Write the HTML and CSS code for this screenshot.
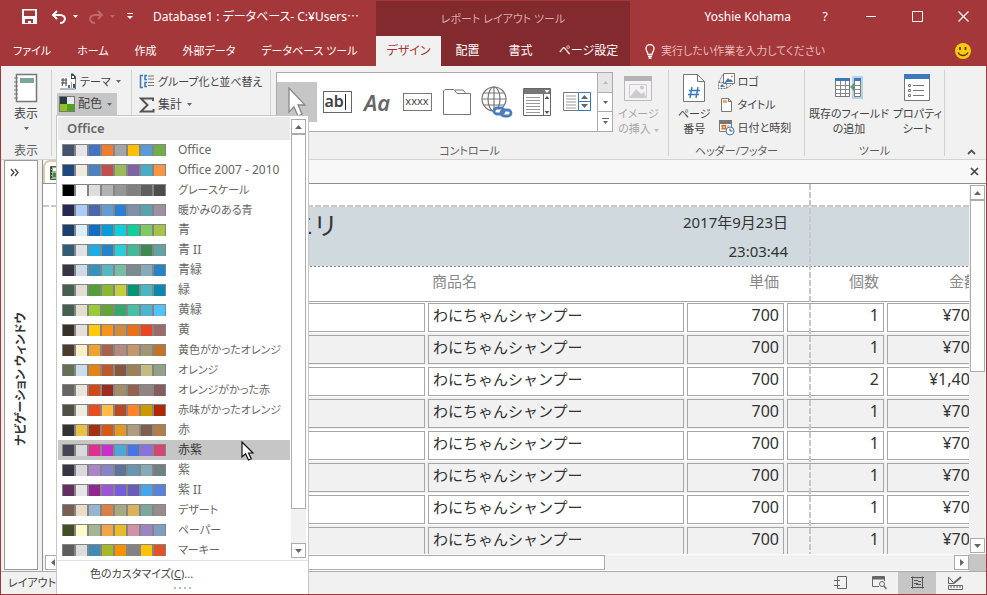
FILE: index.html
```html
<!DOCTYPE html>
<html lang="ja">
<head>
<meta charset="utf-8">
<title>Database1</title>
<link rel="stylesheet" href="styles.css">
</head>
<body>
<div class="window">
  <header class="header">
    <div class="header-main">
      <div class="titlebar">
        <button class="qat save" aria-label="上書き保存"><svg width="15" height="15" viewBox="0 0 15 15"><path d="M0 0h15v15H0z" fill="#fff"/><path d="M2 1.500h11V7H2zM3 10h8v4H9v-2H6v2H3z" fill="#a4373a"/></svg></button>
        <button class="qat undo" aria-label="元に戻す"><svg width="16" height="14" viewBox="0 0 16 14" fill="none" stroke="#fff" stroke-width="2"><path d="M6 1L2 5l4 4M2 5h7c7 0 6 8 0 8"/></svg></button>
        <svg class="arrow" width="5" height="3"><path d="M0 0h5L2.500 3z" fill="#fff"/></svg>
        <button class="qat redo" aria-label="やり直し"><svg width="16" height="14" viewBox="0 0 16 14" fill="none" stroke="#c0696c" stroke-width="2"><path d="M10 1l4 4-4 4M14 5H7C0 5 1 13 7 13"/></svg></button>
        <svg class="arrow" width="5" height="3"><path d="M0 0h5L2.500 3z" fill="#c0696c"/></svg>
        <button class="qat custom" aria-label="カスタマイズ"><svg width="6" height="7"><path d="M0 0h6v1H0zM0 3h6L3 6z" fill="#fff"/></svg></button>
        <span class="doc-title">Database1 : データベース- C:¥Users<span class="dots">…</span></span>
      </div>
      <nav class="tabs">
        <button>ファイル</button><button>ホーム</button><button>作成</button><button>外部データ</button><button>データベース ツール</button>
      </nav>
    </div>
    <div class="header-context">
      <div class="context-title">レポート レイアウト ツール</div>
      <nav class="tabs">
        <button class="active">デザイン</button><button>配置</button><button>書式</button><button>ページ設定</button>
      </nav>
    </div>
    <div class="header-side">
      <div class="titlebar controls">
        <span class="user">Yoshie Kohama</span>
        <button aria-label="ヘルプ">?</button>
        <button aria-label="最小化"><svg width="11" height="11"><path d="M0 5.500h10" stroke="#fff"/></svg></button>
        <button aria-label="最大化"><svg width="11" height="11"><path d="M.5.5h10v10H.5z" fill="none" stroke="#fff"/></svg></button>
        <button aria-label="閉じる"><svg width="11" height="11"><path d="M.5.5l10 10M10.500.5l-10 10" stroke="#fff" stroke-width="1.200"/></svg></button>
      </div>
      <div class="tell">
        <svg width="10" height="15" viewBox="0 0 10 15" fill="none" stroke="#fff" stroke-width="1.300"><path d="M3 10.500C3 8 1 7.500 1 4.500a4 4 0 018 0c0 3-2 3.500-2 6zM3 12.300h4M3.500 14h3"/></svg>
        <input type="text" aria-label="操作アシスト" placeholder="実行したい作業を入力してください">
        <button class="smile" aria-label="フィードバック"><svg width="16" height="16" viewBox="0 0 16 16"><circle cx="8" cy="8" r="8" fill="#fcca0c"/><path d="M5 4v3M10.500 4v3" stroke="#5d3b10" stroke-width="1.800"/><path d="M3 9.500c2 4 8 4 10 0" fill="none" stroke="#5d3b10" stroke-width="1.300"/></svg></button>
      </div>
    </div>
  </header>

  <section class="ribbon">
    <div class="group">
      <div class="group-body center">
        <button class="large"><svg width="26" height="30" viewBox="0 0 26 30"><path d="M3.500 1.500h20v27h-20z" fill="#fff" stroke="#777" stroke-width="1.500"/><path d="M7 5h14v5H7z" fill="#7aa69b"/><path d="M1 5h4M1 9h4M1 13h4M1 17h4M1 21h4M1 25h4" stroke="#777"/></svg><span>表示</span><svg class="arrow low" width="5" height="3"><path d="M0 0h5L2.500 3z" fill="#666"/></svg></button>
      </div>
      <div class="group-label wide">表示</div>
    </div>
    <div class="group">
      <div class="group-body stack">
        <button class="small"><svg width="18" height="18" viewBox="0 0 18 18"><path d="M1 4h11v12H1z" fill="#fff"/><path d="M11 1h5v15h-5z" fill="#fff"/><path d="M1 16h15.500V5" fill="none" stroke="#777"/><path d="M12 .5h2l3 3V6h-5z" fill="#3c4a63"/><path d="M13 3h2v2h-2z" fill="#fff"/><path d="M2 7h6M2 10h6M4 5v4l-1 4M7 5v8" fill="none" stroke="#444"/><path d="M9 12h2v3H9z" fill="#4472c4"/><path d="M12 9h1v6h-1z" fill="#e08a3e"/><path d="M14 11h2v4h-2z" fill="#2b579a"/></svg><span>テーマ</span><svg class="arrow" width="5" height="3"><path d="M0 0h5L2.500 3z" fill="#666"/></svg></button>
        <div class="menu-anchor">
          <button class="small wide pressed"><svg width="16" height="16"><path d="M0 0h16v16H0z" fill="#777"/><path d="M1 1h7v7H1z" fill="#2b3a42"/><path d="M8 1h7v7H8z" fill="#e7ebee"/><path d="M1 8h7v7H1z" fill="#90c226"/><path d="M8 8h7v7H8z" fill="#54a021"/></svg><span>配色</span><svg class="arrow" width="5" height="3"><path d="M0 0h5L2.500 3z" fill="#666"/></svg></button>
          <div class="menu">
            <div class="menu-scroll">
              <div class="menu-main">
                <div class="menu-heading">Office</div>
                <div class="palette-list" id="palettes"></div>
              </div>
              <div class="scrollbar menu-bar">
                <button aria-label="上へ"><svg width="7" height="4"><path d="M0 4h7L3.500 0z" fill="#666"/></svg></button>
                <div class="thumb"></div><div class="track"></div>
                <button aria-label="下へ"><svg width="7" height="4"><path d="M0 0h7L3.500 4z" fill="#666"/></svg></button>
              </div>
            </div>
            <button class="customize">色のカスタマイズ(<u>C</u>)...</button>
            <div class="grip"><i></i><i></i><i></i><i></i></div>
            <svg class="cursor" width="14" height="20" viewBox="0 0 14 20"><path d="M1 1v15l3.500-3.200L7.500 19l2.800-1.200L7.500 12H12z" fill="#fff" stroke="#111" stroke-width="1.200"/></svg>
          </div>
        </div>
      </div>
      <div class="group-label"></div>
    </div>
    <div class="group">
      <div class="group-body stack">
        <button class="small"><svg width="16" height="16" viewBox="0 0 16 16"><path d="M4 1.500H1.500v12H4M8 1.500H6v4h2M8 8.500H6v4h2" fill="none" stroke="#3b78bd" stroke-width="1.500"/><path d="M9 2h6M9 5h6M9 8.500h6M9 11.500h6" stroke="#777"/></svg><span>グループ化と並べ替え</span></button>
        <button class="small wide"><svg width="16" height="16" viewBox="0 0 16 16"><path d="M14 4V1.500H2L8.500 8 2 14.500h12.500V12" fill="none" stroke="#555" stroke-width="2"/></svg><span>集計</span><svg class="arrow" width="5" height="3"><path d="M0 0h5L2.500 3z" fill="#666"/></svg></button>
      </div>
      <div class="group-label"></div>
    </div>
    <div class="group">
      <div class="group-body controls-body">
        <div class="gallery">
          <button class="pressed" aria-label="選択"><svg width="22" height="30" viewBox="0 0 22 30"><path d="M3 1v24l5-5 4 9 4-2-4-9h7z" fill="#fff" stroke="#888" stroke-width="1.300"/></svg></button>
          <button><span class="text-box">ab</span></button>
          <button><span class="label-glyph">Aa</span></button>
          <button><span class="button-glyph">xxxx</span></button>
          <button aria-label="タブ"><svg width="28" height="26" viewBox="0 0 28 26"><path d="M.5 25.500V2l1.500-1.500h9L14 4.500h13.500v21zM12 1h8l3 3.500" fill="#fff" stroke="#777"/></svg></button>
          <button aria-label="リンク"><svg width="32" height="32" viewBox="0 0 32 32" fill="none"><g stroke="#777" stroke-width="1.200"><circle cx="13" cy="13" r="12"/><ellipse cx="13" cy="13" rx="6" ry="12"/><path d="M13 1v24M1 13h24M3 7h20M3 19h20"/></g><path d="M15 21h13v9H13z" fill="#fff"/><g stroke="#4a7ebb" stroke-width="2.800"><rect x="13" y="22" width="10" height="6" rx="3"/><rect x="20" y="24" width="10" height="6" rx="3"/></g></svg></button>
          <button aria-label="リスト ボックス"><svg width="28" height="28" viewBox="0 0 28 28"><path d="M.5.500h27v27H.5z" fill="#fff" stroke="#666"/><path d="M1 1h26v5H1z" fill="#777"/><path d="M20.500 6v21" stroke="#666"/><path d="M3 9.500h14M3 12.500h14M3 15.500h14M3 18.500h14M3 21.500h14M3 24.500h14" stroke="#999"/><path d="M21.500 2h5L24 5z" fill="#fff"/><path d="M21.500 11h5L24 8zM21.500 23h5L24 26z" fill="#555"/></svg></button>
          <button aria-label="コンボ"><svg width="28" height="20" viewBox="0 0 28 20"><path d="M.5.500h27v18H.5z" fill="#fff" stroke="#777"/><path d="M3 4h10M3 7h10M3 10h10M3 13h10M3 16h10" stroke="#999"/><path d="M15.500.5h12v18h-12zM15.500 9.500h12" fill="#fff" stroke="#3b78bd"/><path d="M18 7h7l-3.500-4zM18 12h7l-3.500 4z" fill="#666"/></svg></button>
          <div class="gallery-nav">
            <button class="off" aria-label="前へ"><svg width="5" height="3"><path d="M0 3h5L2.500 0z" fill="#bbb"/></svg></button>
            <button aria-label="次へ"><svg width="5" height="3"><path d="M0 0h5L2.500 3z" fill="#666"/></svg></button>
            <button aria-label="その他"><svg width="7" height="7"><path d="M0 0h7v1H0zM1 3h5L3.500 6z" fill="#666"/></svg></button>
          </div>
        </div>
        <button class="large disabled"><svg width="28" height="30" viewBox="0 0 28 30"><path d="M.5 3.500h27v24H.5z" fill="#f5f1f5" stroke="#bbb"/><path d="M0 3h28v5H0z" fill="#b3b3b3"/><path d="M5.500 11.500h17v13h-17z" fill="none" stroke="#ccc"/><path d="M6 24l6-8 5 5 3-2 2 5z" fill="#ccc"/><circle cx="18" cy="14.500" r="2" fill="#ccc"/></svg><span>イメージ<br>の挿入 <svg class="inline-arrow" width="5" height="3"><path d="M0 0h5L2.500 3z" fill="#bbb"/></svg></span></button>
      </div>
      <div class="group-label">コントロール</div>
    </div>
    <div class="group">
      <div class="group-body pair">
        <button class="large"><svg width="22" height="30" viewBox="0 0 22 30"><path d="M.5 1.500h14l7 7v20H.5zM14.500 1.500v7h7" fill="#fff" stroke="#777"/><path d="M9 14l-2 11M15 14l-2 11M6 17.500h11M5 21.500h11" stroke="#3b78bd" stroke-width="1.400"/></svg><span>ページ<br>番号</span></button>
        <div class="triple">
          <button class="small"><svg width="17" height="17" viewBox="0 0 17 17"><path d="M5.500.5h11v10h-11z" fill="#fff" stroke="#777"/><path d="M7 9l3-4 2 2 1-1 2 3z" fill="#3b78bd"/><circle cx="14" cy="3.500" r="1" fill="#e08a3e"/><path d="M.5 9.500h8v6h-8zM1 9l4-8M9 15l6-4" fill="none" stroke="#777" stroke-dasharray="2 1"/><path d="M2 14l2-3 3 3z" fill="#3b78bd"/></svg><span>ロゴ</span></button>
          <button class="small"><svg width="17" height="16" viewBox="0 0 17 16"><path d="M3.500 1.500h7l3 3v10h-10zM10.500 1.500v3h3" fill="#fff" stroke="#777"/><path d="M5 3h4v3H5z" fill="#f0a860"/></svg><span>タイトル</span></button>
          <button class="small"><svg width="17" height="17" viewBox="0 0 17 17"><path d="M1.500 2.500h12v10h-12z" fill="#fff" stroke="#777"/><path d="M1 1h13v4H1z" fill="#777"/><path d="M3 7h9M3 10h9" stroke="#999" stroke-dasharray="2 1"/><path d="M4.500 6.500h3v3h-3z" fill="none" stroke="#e06a1c" stroke-width="1.500"/><circle cx="12" cy="12" r="4" fill="#fff" stroke="#3b78bd"/><path d="M12 9.500V12h2.500" fill="none" stroke="#555"/></svg><span>日付と時刻</span></button>
        </div>
      </div>
      <div class="group-label">ヘッダー/フッター</div>
    </div>
    <div class="group">
      <div class="group-body pair tools">
        <button class="large"><svg width="30" height="30" viewBox="0 0 30 30"><path d="M18 3h11v23H18z" fill="#b5d5e6"/><path d="M1.500 5.500h14v18h-14zM20.500 5.500h6v18h-6z" fill="#fff" stroke="#777"/><path d="M1 5h15v3H1zM20 5h7v3h-7z" fill="#3b78bd"/><path d="M1 12.500h14M1 16.500h14M1 20.500h14M6.500 8v15M11.500 8v15M20 12.500h7M20 16.500h7M20 20.500h7" stroke="#888"/><path d="M20 10v8l-4-4z" fill="#5c9c86"/></svg><span>既存のフィールド<br>の追加</span></button>
        <button class="large"><svg width="26" height="30" viewBox="0 0 26 30"><path d="M.5 1.500h25v26H.5z" fill="#fff" stroke="#777"/><path d="M0 1h26v5H0z" fill="#3b78bd"/><path d="M9 12.500h11M9 17.500h11M9 22.500h11" stroke="#777"/><path d="M4.500 11.500h2v2h-2zM4.500 16.500h2v2h-2zM4.500 21.500h2v2h-2z" fill="none" stroke="#777"/></svg><span>プロパティ<br>シート</span></button>
      </div>
      <div class="group-label">ツール</div>
    </div>
    <button class="collapse" aria-label="リボンを折りたたむ"><svg width="9" height="6"><path d="M1 5l3.500-3.500L8 5" fill="none" stroke="#555" stroke-width="1.800"/></svg></button>
  </section>

  <main class="workspace">
    <aside class="nav-pane">
      <button class="expand" aria-label="開く"><svg width="9" height="9"><path d="M1 1l3 3.500L1 8M5 1l3 3.500L5 8" fill="none" stroke="#444" stroke-width="1.300"/></svg></button>
      <div class="nav-text">ナビゲーション ウィンドウ</div>
    </aside>
    <section class="document">
      <div class="doc-tabs">
        <button class="doc-tab" aria-label="レポート"><svg width="16" height="14" viewBox="0 0 16 14"><path d="M.5.5h15v13H.5z" fill="#8fc07a" stroke="#555"/><path d="M1.500 1v12" stroke="#333" stroke-dasharray="2 1"/><path d="M3 2h4v3H3z" fill="#fff"/><path d="M3 7h5v4H3z" fill="#48874a"/></svg></button>
        <button class="doc-close" aria-label="閉じる"><svg width="9" height="9"><path d="M1 1l7 7M8 1L1 8" stroke="#444" stroke-width="1.600"/></svg></button>
      </div>
      <div class="view">
        <div class="canvas">
          <div class="top-margin"></div>
          <div class="report">
            <div class="band"><div class="band-inner"><div class="report-title">エリ</div><div class="stamp">2017年9月23日<br>23:03:44</div></div></div>
            <table>
              <colgroup><col class="c-first"><col class="c-name"><col class="c-num"><col class="c-num"><col class="c-num"></colgroup>
              <thead><tr><th></th><th class="left">商品名</th><th>単価</th><th>個数</th><th>金額</th></tr></thead>
              <tbody id="rows"></tbody>
            </table>
          </div>
          <div class="page-edge"></div>
        </div>
        <div class="scrollbar v-bar">
          <button aria-label="上へ"><svg width="7" height="4"><path d="M0 4h7L3.500 0z" fill="#666"/></svg></button>
          <div class="thumb"></div><div class="track"></div>
          <button aria-label="下へ"><svg width="7" height="4"><path d="M0 0h7L3.500 4z" fill="#666"/></svg></button>
        </div>
        <div class="scrollbar h-bar">
          <button aria-label="左へ"><svg width="4" height="7"><path d="M4 0v7L0 3.500z" fill="#666"/></svg></button>
          <div class="thumb"></div><div class="track"></div>
          <button aria-label="右へ"><svg width="4" height="7"><path d="M0 0v7l4-3.500z" fill="#666"/></svg></button>
        </div>
        <div class="corner"></div>
      </div>
    </section>
  </main>

  <footer class="status">
    <span>レイアウト</span>
    <div class="views">
      <button aria-label="レポート ビュー"><svg width="14" height="14" fill="none" stroke="#666"><path d="M3.500.5h9v12h-9zM0 4.500h6M0 9.500h6" /></svg></button>
      <button aria-label="印刷プレビュー"><svg width="15" height="14" fill="none" stroke="#666"><path d="M7 10.500H.5V.5h12V5"/><path d="M1 2h11" stroke-width="3"/><circle cx="10" cy="8" r="2.500"/><path d="M12 10l2.500 3" stroke-width="1.500"/></svg></button>
      <button class="pressed" aria-label="レイアウト ビュー"><svg width="13" height="14" fill="none" stroke="#555"><path d="M1.500.5v12M11.500.5v12M0 1.500h13M0 11.500h13M3 4.500h4M5 8.500h5M7 5.500h3M3 7.500h4"/></svg></button>
      <button aria-label="デザイン ビュー"><svg width="15" height="15" fill="none" stroke="#666"><path d="M.5 1v6.500H6zM.5 9.500h14v4H.5zM3 10v2M6 10v2M9 10v2M12 10v2"/><path d="M6 7l7-6" stroke-width="2"/></svg></button>
    </div>
  </footer>
</div>
<script src="app.js"></script>
</body>
</html>
```
FILE: styles.css
```css
* { box-sizing: border-box; }

body {
  margin: 0;
  font-family: "Noto Sans", "Noto Sans CJK JP", sans-serif;
  font-size: 12px;
  line-height: 16px;
  font-feature-settings: "palt";
  color: #444;
}

button {
  margin: 0;
  padding: 0;
  border: 0;
  background: none;
  font: inherit;
  font-feature-settings: inherit;
  color: inherit;
}

svg { display: block; flex: none; }

.window {
  display: grid;
  grid-template-rows: 66px 94px minmax(0, 1fr) 23px;
  height: 100vh;
  border: solid #a4373a;
  border-width: 0 1px 1px;
  background: #f1f1f1;
  overflow: hidden;
}

/* Title bar and ribbon tabs */
.header {
  display: grid;
  grid-template-columns: 375px 254px minmax(0, 1fr);
  background: #a4373a;
  color: #fff;
}
.header-main, .header-context, .header-side {
  display: grid;
  grid-template-rows: 36px 30px;
}
.header-context { background: #822a2d; margin-top: 1px; grid-template-rows: 35px 30px; }
.titlebar { display: flex; align-items: center; height: 33px; }
.save { margin-left: 21px; }
.undo { margin: 0 6px 0 14px; }
.redo { margin: 0 6px 0 10px; }
.custom { margin-left: 12px; }
.doc-title { margin-left: 20px; white-space: nowrap; }
.dots { font-family: "Noto Sans CJK JP", sans-serif; font-feature-settings: normal; }
.tabs { display: flex; white-space: nowrap; }
.header-main .tabs { gap: 26px; padding-left: 12px; font-size: 11px; }
.context-title { display: flex; align-items: center; justify-content: center; color: #dba9ab; font-size: 11px; }
.header-context .tabs button { flex: 0 0 53px; }
.header-context .tabs .active { flex-basis: 65px; background: #f1f1f1; color: #a4373a; }
.header-context .tabs button:last-child { flex-basis: 83px; }

.controls { justify-content: flex-end; }
.controls button { display: flex; justify-content: center; width: 46px; }
.user { margin-right: 11px; }
.tell { display: flex; align-items: center; padding: 0 15px; }
.tell input {
  flex: 1;
  min-width: 0;
  margin-left: 6px;
  padding: 0;
  border: 0;
  background: none;
  font: inherit;
  font-size: 11px;
  font-feature-settings: inherit;
}
.tell input::placeholder { color: #e3bcbd; }

/* Ribbon */
.ribbon {
  display: grid;
  grid-template-columns: 51px 80px 139px 398px 136px 140px minmax(0, 1fr);
  border-bottom: 1px solid #d2d2d2;
  font-size: 11px;
  white-space: nowrap;
}
.group {
  display: grid;
  grid-template-rows: 71px 17px;
  margin: 4px 0 0;
  border-right: 1px solid #d2d2d2;
  height: 86px;
}
.group-label { padding-top: 2px; text-align: center; color: #5d5d5d; }
.group-body { display: flex; min-width: 0; }
.center { justify-content: center; }
.center, .wide { font-size: 12px; }
.large { display: flex; flex-direction: column; align-items: center; padding-top: 3px; line-height: 15px; }
.large span { margin-top: 3px; }
.low { margin-top: 6px; }
.disabled { color: #a6a6a6; }
.inline-arrow { display: inline-block; vertical-align: middle; }
.small { display: flex; align-items: center; gap: 3px; height: 22px; padding: 0 5px 0 2px; }
.small .arrow { margin-left: 2px; }
.pressed { background: #c6c6c6; }
.stack { flex-direction: column; align-items: flex-start; padding-left: 5px; }
.menu-anchor { position: relative; }
.stack .small { height: 23px; }
.stack .menu-anchor .small { height: 22px; }

.controls-body { gap: 5px; padding: 2px 0 0 5px; }
.gallery {
  display: flex;
  align-items: center;
  height: 60px;
  border: 1px solid #ababab;
  background: #fff;
}
.gallery > button { display: flex; align-items: center; justify-content: center; width: 40px; height: 40px; }
.text-box {
  border: 1px solid #666;
  width: 29px;
  height: 22px;
  font-size: 16px;
  font-weight: 600;
  line-height: 19px;
  background: linear-gradient(#222, #222) 21px 2px / 1px 16px no-repeat;
  text-align: left;
  padding-left: 1px;
}
.label-glyph { font: italic 600 22px "Noto Sans", sans-serif; color: #666; }
.button-glyph { width: 29px; height: 18px; border: 1px solid #777; line-height: 14px; }
.gallery-nav { display: grid; grid-template-rows: 20px 19px 19px; width: 15px; border-left: 1px solid #ababab; }
.gallery-nav button { display: flex; align-items: center; justify-content: center; border-bottom: 1px solid #ababab; }
.gallery-nav button:last-child { border-bottom: 0; }
.off { background: #e6e6e6; }

.controls-body .large { padding-top: 1px; }
.pair { gap: 7px; padding-left: 9px; }
.triple { display: flex; flex-direction: column; }
.triple .small { height: 23px; padding: 0; }
.tools { gap: 4px; padding-left: 4px; }
.collapse { align-self: end; justify-self: end; padding: 0 10px 4px; }

/* Colour menu */
.menu {
  position: absolute;
  z-index: 10;
  top: 100%;
  left: -1px;
  width: 253px;
  border: 1px solid #c6c6c6;
  background: #fff;
  font-size: 12px;
}
.menu-scroll { display: flex; border-bottom: 1px solid #e1e1e1; padding: 1px 2px 0 1px; }
.menu-main { flex: 1; }
.menu-heading { height: 23px; padding: 3px 9px; background: #eaeaea; font-size: 13px; font-weight: 600; color: #666; }
.palette { display: flex; align-items: center; gap: 12px; width: 100%; height: 20px; padding-left: 4px; color: #666; }
.palette.selected { background: #c6c6c6; color: #333; }
.palette.kana { font-size: 11px; }
.swatches { display: flex; height: 12px; border-top: 1px solid #858585; }
.swatches i { width: 13px; border: solid #858585; border-width: 0 1px; }
.customize { display: block; height: 25px; padding-left: 33px; font-size: 11px; }
.grip { display: flex; justify-content: center; gap: 3px; height: 10px; padding-top: 1px; }
.grip i { width: 2px; height: 2px; background: #b4bfcc; }
.cursor { position: absolute; left: 184px; top: 325px; }

/* Scroll bars */
.scrollbar { display: flex; background: #f1f1f1; }
.scrollbar button { display: flex; flex: none; align-items: center; justify-content: center; width: 15px; height: 15px; border: 1px solid #ababab; background: #fff; }
.thumb { border: 1px solid #ababab; background: #fff; }
.track { flex: 1; }
.menu-bar, .v-bar { flex-direction: column; }
.menu-bar { width: 15px; margin: 2px 0 2px 1px; }
.menu-bar .thumb { height: 375px; }

/* Workspace */
.workspace { display: flex; min-height: 0; }
.nav-pane {
  display: flex;
  flex-direction: column;
  align-items: center;
  width: 34px;
  margin: 0 4px 1px 3px;
  border: 1px solid #9a9a9a;
  background: #fff;
}
.expand { align-self: flex-start; padding: 7px 5px; }
.nav-text {
  flex: 1;
  padding-bottom: 6px;
  writing-mode: vertical-rl;
  text-orientation: sideways;
  transform: rotate(180deg);
  text-align: center;
  font-weight: 700;
  color: #333;
}
.document { display: flex; flex: 1; flex-direction: column; min-width: 0; border-left: 1px solid #8f8f8f; }
.doc-tabs { display: flex; justify-content: space-between; height: 24px; border-bottom: 1px solid #8f8f8f; background: #f8f8f8; }
.doc-tab { width: 60px; padding: 4px 5px; border: 2px solid #d8cba9; border-bottom: 0; border-radius: 7px 7px 0 0; background: #fff; }
.doc-close { padding: 0 7px; }
.view {
  display: grid;
  flex: 1;
  grid-template-columns: minmax(0, 1fr) 17px;
  grid-template-rows: minmax(0, 1fr) 17px;
  min-height: 0;
  background: #fff;
}
.canvas { position: relative; overflow: hidden; }
.top-margin {
  height: 23px;
  background: repeating-linear-gradient(90deg, #c8c8c8 0 6px, #fff 6px 8px) 0 100% / 100% 2px no-repeat;
}
.report { margin-left: 15px; width: 928px; color: #333; font-size: 15px; font-feature-settings: normal; }
.band {
  height: 60px;
  padding-top: 1px;
  background: repeating-linear-gradient(90deg, #888 0 2px, #fff 2px 4px) 0 100% / 100% 1px no-repeat, #cfd9de;
}
.band-inner { display: flex; justify-content: space-between; width: 730px; padding-left: 230px; }
.report-title { font-size: 25px; line-height: 35px; }
.stamp { text-align: right; line-height: 29px; }
table { width: 928px; table-layout: fixed; border-collapse: collapse; }
.c-first { width: 369px; }
.c-name { width: 259px; }
.c-num { width: 100px; }
th { height: 34px; padding: 0 7px 6px; font-weight: 400; color: #888; text-align: right; }
th.left { text-align: left; padding-left: 5px; }
td { height: 32px; padding: 2px 2px 1px 1px; }
tbody tr:first-child td { border-top: 1px solid #a6a6a6; padding-top: 1px; }
tbody tr:nth-child(even) { background: #f1f1f1; }
.cell { display: block; height: 29px; padding: 0 4px; border: 1px solid #a6a6a6; line-height: 23px; }
.num { font-size: 16px; text-align: right; }
.page-edge {
  position: absolute;
  top: 0;
  bottom: 0;
  left: 766px;
  width: 2px;
  background: repeating-linear-gradient(#c8c8c8 0 6px, transparent 6px 8px);
}
.v-bar { margin: 1px 1px 1px 0; width: 16px; padding-left: 1px; }
.v-bar .thumb { height: 172px; }
.h-bar { margin: 1px 0; padding-left: 2px; }
.h-bar .thumb { width: 545px; }
.corner { background: #c6c6c6; }

/* Status bar */
.status { display: flex; justify-content: space-between; border-top: 1px solid #ababab; }
.status > span { padding: 3px 7px; font-size: 11px; }
.views { display: flex; padding-right: 12px; }
.views button { display: flex; align-items: center; justify-content: center; width: 38px; }
```
FILE: app.js
```js
const palettes = [
  ["Office", "#44546a #e7e6e6 #4472c4 #ed7d31 #a5a5a5 #ffc000 #5b9bd5 #70ad47"],
  ["Office 2007 - 2010", "#1f497d #eeece1 #4f81bd #c0504d #9bbb59 #8064a2 #4bacc6 #f79646"],
  ["グレースケール", "#000000 #f8f8f8 #dddddd #b2b2b2 #969696 #808080 #5f5f5f #4d4d4d"],
  ["暖かみのある青", "#242852 #accbf9 #4a66ac #629dd1 #297fd5 #7f8fa9 #5aa2ae #9d90a0"],
  ["青", "#17406d #dbeff9 #0f6fc6 #009dd9 #0bd0d9 #10cf9b #7cca62 #a5c249"],
  ["青 II", "#335b74 #dfe3e5 #1cade4 #2683c6 #27ced7 #42ba97 #3e8853 #62a39f"],
  ["青緑", "#373545 #cedbe6 #3494ba #58b6c0 #75bda7 #7a8c8e #84acb6 #2683c6"],
  ["緑", "#455f51 #e3ded1 #549e39 #8ab833 #c0cf3a #029676 #4ab5c4 #0989b1"],
  ["黄緑", "#455f51 #e2dfcc #99cb38 #63a537 #37a76f #44c1a3 #4eb3cf #51c3f9"],
  ["黄", "#39302a #e5dedb #ffca08 #f8931d #ce8d3e #ec7016 #e64823 #9c6a6a"],
  ["黄色がかったオレンジ", "#4e3b30 #fbeec9 #f0a22e #a5644e #b58b80 #c3986d #a19574 #c17529"],
  ["オレンジ", "#637052 #ccddea #e48312 #bd582c #865640 #9b8357 #c2bc80 #94a088"],
  ["オレンジがかった赤", "#696464 #e9e5dc #d34817 #9b2d1f #a28e6a #956251 #918485 #855d5d"],
  ["赤味がかったオレンジ", "#505046 #eeece1 #e84c22 #ffbd47 #b64926 #ff8427 #cc9900 #b22600"],
  ["赤", "#323232 #e5c243 #a5300f #d55816 #e19825 #b19c7d #7f5f52 #b27d49"],
  ["赤紫", "#454551 #d8d9dc #e32d91 #c830cc #4ea6dc #4775e7 #8971e1 #d54773"],
  ["紫", "#373545 #dcd8dc #ad84c6 #8784c7 #5d739a #6997af #84acb6 #6f8183"],
  ["紫 II", "#632e62 #eae5eb #92278f #9b57d3 #755dd9 #665eb8 #45a5ed #5982db"],
  ["デザート", "#775f55 #ebddc3 #94b6d2 #dd8047 #a5ab81 #d8b25c #7ba79d #968c8c"],
  ["ペーパー", "#444d26 #fefac9 #a5b592 #f3a447 #e7bc29 #d092a7 #9c85c0 #809ec2"],
  ["マーキー", "#5e5e5e #dddddd #418ab3 #a6b727 #f69200 #838383 #fec306 #df5327"]
];

// Names written mostly in kana use the smaller label size
const hasKana = name => /[\u3040-\u30ff]/.test(name);

document.getElementById("palettes").innerHTML = palettes.map(([name, colors]) => {
  const cells = colors.split(" ").map(c => `<i style="background:${c}"></i>`).join("");
  const state = (name === "赤紫" ? " selected" : "") + (hasKana(name) ? " kana" : "");
  return `<button class="palette${state}"><span class="swatches">${cells}</span><span>${name}</span></button>`;
}).join("");

const quantities = [1, 1, 2, 1, 1, 1, 1, 1];
document.getElementById("rows").innerHTML = quantities.map(n => `<tr>
  <td><span class="cell"></span></td>
  <td><span class="cell">わにちゃんシャンプー</span></td>
  <td><span class="cell num">700</span></td>
  <td><span class="cell num">${n}</span></td>
  <td><span class="cell num">¥${(n * 700).toLocaleString("en-US")}</span></td>
</tr>`).join("");
```
